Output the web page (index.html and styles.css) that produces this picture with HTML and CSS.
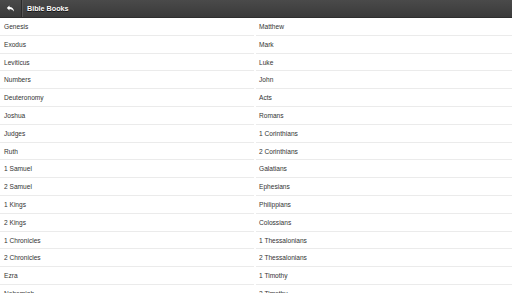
FILE: index.html
```html
<!DOCTYPE html>
<html lang="en">

<head>
  <meta charset="utf-8" />
  <title>Bible Books</title>
  <link rel="stylesheet" href="styles.css">
</head>

<body>
  <div class="header">
    <a class="back" href="#">
      <svg width="9" height="7" viewBox="0 0 9 7">
        <path d="M3.5 0.5 L0.8 3 L3.5 5.5 L3.5 4 Q6.5 3.8 8 6.5 Q7.6 2 3.5 2 Z" fill="#fff" />
      </svg>
    </a>
    <h1>Bible Books</h1>
  </div>

  <div class="books">
    <ul class="list">
      <li>Genesis</li>
      <li>Exodus</li>
      <li>Leviticus</li>
      <li>Numbers</li>
      <li>Deuteronomy</li>
      <li>Joshua</li>
      <li>Judges</li>
      <li>Ruth</li>
      <li>1 Samuel</li>
      <li>2 Samuel</li>
      <li>1 Kings</li>
      <li>2 Kings</li>
      <li>1 Chronicles</li>
      <li>2 Chronicles</li>
      <li>Ezra</li>
      <li>Nehemiah</li>
      <li>Esther</li>
      <li>Job</li>
      <li>Psalms</li>
      <li>Proverbs</li>
    </ul>
    <ul class="list right">
      <li>Matthew</li>
      <li>Mark</li>
      <li>Luke</li>
      <li>John</li>
      <li>Acts</li>
      <li>Romans</li>
      <li>1 Corinthians</li>
      <li>2 Corinthians</li>
      <li>Galatians</li>
      <li>Ephesians</li>
      <li>Philippians</li>
      <li>Colossians</li>
      <li>1 Thessalonians</li>
      <li>2 Thessalonians</li>
      <li>1 Timothy</li>
      <li>2 Timothy</li>
      <li>Titus</li>
      <li>Philemon</li>
      <li>Hebrews</li>
      <li>James</li>
    </ul>
  </div>
</body>

</html>
```

FILE: styles.css
```css
body {
  margin: 0;
  font-family: "Liberation Sans", Arial, sans-serif;
  background: #fff;
}

.header {
  display: flex;
  align-items: center;
  height: 18px;
  background: linear-gradient(#4a4a4a, #3a3a3a);
  border-bottom: 1px solid #2e2e2e;
  box-sizing: border-box;
}

.back {
  display: flex;
  align-items: center;
  justify-content: center;
  width: 21px;
  height: 100%;
  border-right: 1px solid #2a2a2a;
  box-shadow: 1px 0 0 #555;
}

h1 {
  margin: 0 0 0 5px;
  font-size: 7.2px;
  font-weight: bold;
  color: #fff;
  text-shadow: 0 1px 0 #111;
}

.books {
  display: grid;
  grid-template-columns: 254px 1fr;
  column-gap: 2px;
}

.list {
  list-style: none;
  margin: 0;
  padding: 0;
}

.list li {
  height: 17.8px;
  line-height: 18px;
  padding-left: 4px;
  font-size: 6.6px;
  color: #333;
  border-bottom: 1px solid #ebebeb;
  box-sizing: border-box;
}

.right li {
  padding-left: 3px;
}
```
